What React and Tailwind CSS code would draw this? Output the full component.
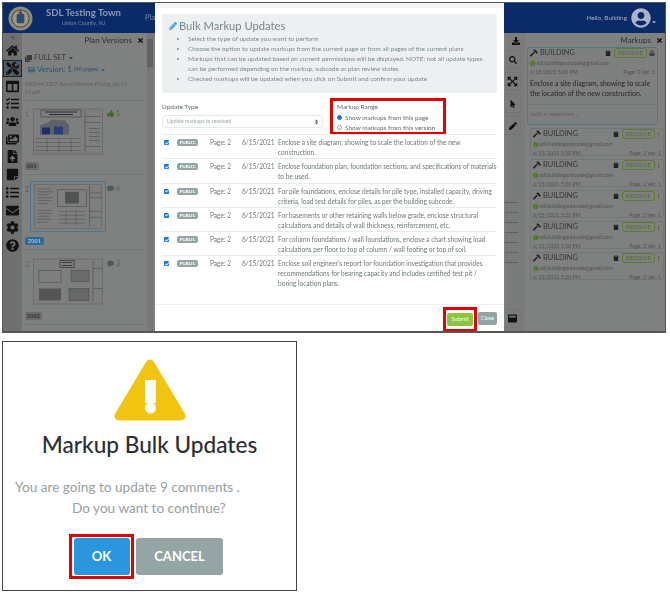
import React from 'react';
import {
  FaHome, FaTools, FaColumns, FaTasks, FaUsers, FaImages, FaFileUpload, FaStickyNote, FaList,
  FaEnvelope, FaCog, FaQuestionCircle, FaDownload, FaSearch, FaExpandArrowsAlt, FaMousePointer,
  FaPen, FaWindowMaximize, FaHammer, FaClipboard, FaLock, FaInfoCircle, FaEllipsisV, FaUserCircle,
  FaCaretDown, FaThumbsUp, FaComment, FaTimes, FaPencilAlt, FaClone, FaRegImage, FaArrowRight, FaCheck,
} from 'react-icons/fa';

const navIcons = [FaHome, FaTools, FaColumns, FaTasks, FaUsers, FaImages, FaFileUpload, FaStickyNote, FaList, FaEnvelope, FaCog, FaQuestionCircle];
const toolIcons = [FaSearch, FaExpandArrowsAlt, FaMousePointer, FaPen];

const bullets = [
  'Select the type of update you want to perform',
  'Choose the option to update markups from the current page or from all pages of the current plans',
  'Markups that can be updated based on current permissions will be displayed. NOTE: not all update types can be performed depending on the markup, subcode or plan review states',
  'Checked markups will be updated when you click on Submit and confirm your update',
];

const rows = [
  'Enclose a site diagram, showing to scale the location of the new construction.',
  'Enclose foundation plan, foundation sections, and specifications of materials to be used.',
  'For pile foundations, enclose details for pile type, installed capacity, driving criteria, load test details for piles, as per the building subcode.',
  'For basements or other retaining walls below grade, enclose structural calculations and details of wall thickness, reinforcement, etc.',
  'For column foundations / wall foundations, enclose a chart showing load calculations per floor to top of column / wall footing or top of soil.',
  "Enclose soil engineer's report for foundation investigation that provides recommendations for bearing capacity and includes certified test pit / boring location plans.",
];

// sketchy drawing sheets used as plan thumbnails
const Thumb = ({ kind }) => (
  <svg viewBox="0 0 70 46" className="w-full h-full">
    <rect width="70" height="46" fill="#7d7e7e" />
    <rect x="0.5" y="0.5" width="69" height="45" fill="none" stroke="#555" strokeWidth="0.4" />
    {kind === 1 && (
      <g>
        <rect x="8" y="1.5" width="40" height="7" fill="none" stroke="#333" strokeWidth="0.5" />
        <path d="M12 3.5h32M16 6h24" stroke="#222" strokeWidth="0.9" />
        <path d="M7 26v-9l8-3 4-3 13 1 4 5v9z" fill="#5d6168" />
        <rect x="9" y="19" width="8" height="7" fill="#1e2f66" />
        <rect x="21" y="18" width="9" height="8" fill="#2b3d78" />
        <path d="M2 30h46M2 34h46M2 38h46M2 42h46M14 30v14M26 30v14M38 30v14" stroke="#444" strokeWidth="0.4" />
        <path d="M52 2v42M52 8h16M52 14h16M56 20h10M56 24h10M56 28h10M56 32h10M52 38h16" stroke="#444" strokeWidth="0.5" />
      </g>
    )}
    {kind === 2 && (
      <g>
        <path d="M4 5h14M4 8h16M4 11h12M4 14h15M4 17h14M4 20h10M4 27h14M4 30h15M4 33h12M4 36h14M4 39h10" stroke="#444" strokeWidth="0.5" />
        <rect x="24" y="6" width="30" height="17" fill="none" stroke="#333" strokeWidth="0.4" />
        <rect x="32" y="8" width="14" height="12" fill="#505151" />
        <path d="M25 28h28M25 32h28M25 36h28M25 40h28M33 28v14M43 28v14" stroke="#444" strokeWidth="0.4" />
        <path d="M57 2v42M57 9h12M57 14h12M57 28h12M57 34h12" stroke="#444" strokeWidth="0.5" />
      </g>
    )}
    {kind === 3 && (
      <g>
        <rect x="27" y="2" width="14" height="7" fill="none" stroke="#333" strokeWidth="0.7" />
        <path d="M29 4h10M29 7h10" stroke="#333" strokeWidth="0.9" />
        <rect x="6" y="12" width="22" height="12" fill="none" stroke="#444" strokeWidth="0.5" />
        <rect x="38" y="12" width="18" height="11" fill="#6a6b6b" stroke="#444" strokeWidth="0.5" />
        <rect x="6" y="30" width="22" height="12" fill="#555" />
        <rect x="36" y="30" width="20" height="12" fill="#666767" stroke="#444" strokeWidth="0.5" />
        <path d="M60 2v42M60 10h9M60 30h9" stroke="#444" strokeWidth="0.5" />
      </g>
    )}
  </svg>
);

const Sheet = ({ num, kind, tag, side, selected, active }) => (
  <div className="flex flex-col border-b border-[#747575] pb-[4px] mb-[6px] shrink-0">
    <div className="flex items-start h-[51px]">
      <span className="w-[8px] text-[7px] leading-[12px] text-[#5d5e5e] pt-[2px]">{num}</span>
      <div className={selected ? 'w-[76px] h-[51px] -ml-[3px] shrink-0 p-[2px] border border-[#4b7494] rounded-[2px]' : 'w-[70px] h-[47px] mt-[2px] mr-[3px] shrink-0'}>
        <Thumb kind={kind} />
      </div>
      <div className="ml-[1px] flex items-center gap-[2px] text-[7px] text-[#5d5e5e] pt-[2px]">{side}</div>
    </div>
    <span className={`mt-[5px] self-start text-[5.5px] font-bold leading-[8px] rounded-[2px] px-[2px] ${active ? 'bg-[#2a6a96] text-[#a9c3d6] px-[3px]' : 'bg-[#6b6c6c] text-[#333]'}`}>{tag}</span>
  </div>
);

const MarkupHead = ({ locked }) => (
  <div className="flex items-center h-[10px]">
    <FaHammer className="text-[#222] text-[8px] mr-[2px] shrink-0" />
    <span className="text-[7.4px] leading-[10px] text-[#333] grow">BUILDING</span>
    <FaClipboard className="text-[#222] text-[6px] mr-[3px] shrink-0" />
    <span className="border border-[#5c7a34] rounded-[3px] text-[#51692d] text-[5.6px] leading-[8px] px-[3px] tracking-[0.2px]">RESOLVE</span>
    {locked ? <FaLock className="text-[#444] text-[6px] ml-[2px] shrink-0" /> : <FaEllipsisV className="text-[#51692d] text-[5px] ml-[1px] shrink-0" />}
  </div>
);

const MarkupMeta = () => (
  <>
    <div className="flex items-center text-[5.3px] leading-[9px] text-[#505151] mt-[1px]">
      <FaInfoCircle className="text-[#4a7a22] text-[5.5px] mr-[1px] shrink-0" />
      sdl.buildingsubcode@gmail.com
    </div>
    <div className="flex justify-between text-[5.3px] leading-[8px] text-[#505151]">
      <span>6/15/2021 5:20 PM</span>
      <span>Page: 2 Ver: 1</span>
    </div>
  </>
);

const App = () => (
  <div className="w-[670px] h-[592px] bg-white pt-[2px] pl-[2px] font-['Lato','Noto_Sans',sans-serif] flex flex-col overflow-hidden">
    {/* main screen, dimmed behind the dialog */}
    <div className="relative w-[664px] h-[331px] shrink-0 border border-[#555] border-b-2 overflow-hidden bg-[#7f8080] flex flex-col blur-[0.3px]">
      <header className="h-[30px] shrink-0 bg-[#0b2a68] flex items-center pl-[5px] pr-[8px]">
        <svg viewBox="0 0 26 26" className="w-[25px] h-[25px]">
          <circle cx="13" cy="13" r="12.5" fill="#8a8a80" />
          <circle cx="13" cy="13" r="9" fill="#a09678" stroke="#3f3f3f" strokeWidth="1" />
          <rect x="9" y="8" width="8" height="10" rx="2" fill="#2a4a7a" />
          <path d="M13 4l2 4h-4z" fill="#7a2a2a" />
        </svg>
        <div className="w-[85px] ml-[8px] flex flex-col items-center pb-[2px]">
          <span className="text-[9.6px] leading-[12px] font-bold text-[#8d99b4] whitespace-nowrap">SDL Testing Town</span>
          <span className="text-[5.6px] leading-[8px] text-[#7888a8] whitespace-nowrap">Union County, NJ</span>
        </div>
        <span className="ml-[19px] text-[7.5px] text-[#7888a8]">Pla</span>
        <div className="ml-auto flex items-center">
          <span className="text-[6.4px] text-[#a2adc4]">Hello, Building</span>
          <FaUserCircle className="ml-[4px] text-[20px] text-[#a9b4ca]" />
          <FaCaretDown className="text-[6px] text-[#a9b4ca] self-end mb-[3px]" />
        </div>
      </header>

      <div className="flex grow min-h-0">
        {/* left nav */}
        <nav className="w-[19px] bg-[#6f7070] flex flex-col items-center shrink-0">
          <FaArrowRight className="text-[5px] text-[#555] my-[2px] shrink-0" />
          {navIcons.map((Icon, i) => (
            <div key={i} className={`w-[19px] h-[17.7px] shrink-0 flex items-center justify-center ${i === 1 ? 'bg-[#4f5c66] border border-[#1c2430]' : ''}`}>
              <Icon className="text-[13px] text-[#121212]" />
            </div>
          ))}
        </nav>

        {/* plan versions */}
        <aside className="w-[133px] shrink-0 flex min-w-0">
          <div className="w-[124px] shrink-0 pl-[3px] pr-[2px] flex flex-col overflow-hidden">
            <div className="flex items-center justify-end text-[8.2px] leading-[12px] text-[#2f3030] h-[14px] shrink-0">
              Plan Versions
              <FaTimes className="ml-[5px] text-[7px] text-[#111]" />
            </div>
            <div className="flex items-center text-[7.5px] text-[#3a3b3b] mt-[6px] leading-[10px] shrink-0">
              <FaClone className="text-[7px] mr-[2px]" />
              FULL SET
              <FaCaretDown className="text-[6px] ml-[2px]" />
            </div>
            <div className="flex items-center text-[8px] text-[#255477] ml-[3px] leading-[11px] shrink-0 mt-[1px]">
              <FaRegImage className="text-[7px] mr-[2px]" />
              Version: 1
              <span className="text-[5.5px] ml-[2px]">(40 pages)</span>
              <FaCaretDown className="text-[6px] ml-[1px]" />
            </div>
            <div className="text-[5.3px] leading-[8px] text-[#5d5e5e] mt-[5px] pb-[4px] border-b border-[#747575] mb-[5px] shrink-0">
              <div className="w-[106px]">190044-1307-Beach-Terrace-Pricing_06-17-19.pdf</div>
            </div>
            <Sheet num="1" kind={1} tag="001" side={<><FaThumbsUp className="text-[#3e6a1e]" /><span className="text-[#3e6a1e]">1</span></>} />
            <Sheet num="2" kind={2} tag="Z001" active selected side={<><FaComment className="text-[#4a5a5a]" />6</>} />
            <Sheet num="3" kind={3} tag="Z002" side={<><FaComment className="text-[#4a5a5a]" />3</>} />
          </div>
          <div className="w-[6px] ml-[1px] bg-[#767777] flex flex-col">
            <div className="h-[28px] mt-[6px] bg-[#606161]" />
          </div>
        </aside>

        <div className="w-[350px] shrink-0" />

        {/* tool strip */}
        <div className="w-[20px] shrink-0 bg-[#7a7b7b] flex flex-col items-start pt-[4px]">
          <FaDownload className="text-[8px] text-[#111] ml-[7px]" />
          <div className="mt-[5px] flex flex-col gap-[3px] items-start">
            {toolIcons.map((Icon, i) => (
              <div key={i} className="w-[16px] h-[19px] border border-[#747575] border-l-0 rounded-r-[3px] flex items-center justify-center">
                <Icon className={`text-[#111] ${i === 1 ? 'text-[11px]' : 'text-[8px]'}`} />
              </div>
            ))}
          </div>
          <div className="grow flex flex-col justify-center gap-[9px] pt-[20px]">
            {[0, 1, 2, 3, 4, 5, 6].map((i) => <div key={i} className="w-[13px] h-px bg-[#5f6060]" />)}
          </div>
          <div className="w-[16px] h-[19px] mb-[3px] border border-[#747575] border-l-0 rounded-r-[3px] flex items-center justify-center">
            <FaWindowMaximize className="text-[9px] text-[#111]" />
          </div>
        </div>

        {/* markups */}
        <aside className="grow min-w-0 pl-[2px] flex flex-col overflow-hidden">
          <div className="flex items-center justify-end h-[14px] shrink-0 text-[8px] text-[#2f3030] pr-[2px]">
            Markups
            <FaTimes className="ml-[5px] text-[7px] text-[#111]" />
          </div>
          <div className="border border-[#54748c] rounded-[3px] bg-[#7e7f7f] mr-[7px] px-[2px] shrink-0">
            <MarkupHead locked />
            <MarkupMeta />
            <p className="text-[6.9px] leading-[10px] text-[#242525] mt-[2px] h-[26px]">Enclose a site diagram, showing to scale the location of the new construction.</p>
            <div className="border-t border-[#747575] -mx-[2px] px-[2px] h-[20px] text-[6.5px] text-[#5d5e5e] pt-[4px]">Add a response...</div>
          </div>
          <div className="flex flex-col gap-[3px] mt-[3px] pl-[3px] pr-[1px] shrink-0">
            {[0, 1, 2, 3, 4].map((i) => (
              <div key={i} className="border border-[#747575] rounded-[2px] px-[2px] h-[28px]">
                <MarkupHead />
                <MarkupMeta />
              </div>
            ))}
          </div>
        </aside>
      </div>

      {/* bulk update dialog */}
      <div className="absolute left-[152px] top-0 bottom-0 w-[349px] bg-white border-t-[5px] border-[#f4f4f4] flex flex-col px-[7px] pt-[6px]">
        <div className="bg-[#ecf0f1] rounded-[2px] h-[79px] shrink-0 px-[7px] pt-[5px]">
          <div className="flex items-center text-[11.2px] leading-[13px] text-[#77888a]">
            <FaPencilAlt className="text-[8px] text-[#3498db] mr-[2px]" />
            Bulk Markup Updates
          </div>
          <ul className="list-disc pl-[19px] mt-[2px] text-[6.45px] leading-[10px] text-[#7b8a8b]">
            {bullets.map((b) => <li key={b}>{b}</li>)}
          </ul>
        </div>

        <div className="flex h-[42px] shrink-0 mt-[5px]">
          <div className="w-[161px] pt-[4px]">
            <div className="text-[6.5px] leading-[10px] text-[#5f6a6b]">Update Type</div>
            <div className="mt-[3px] h-[13px] border border-[#e6e9ea] rounded-[3px] flex items-center justify-between px-[4px] text-[5.2px] text-[#9aa5a6]">
              Update markups to resolved
              <svg viewBox="0 0 6 10" className="w-[3px] h-[6px]"><path d="M3 0l3 4H0zM3 10L0 6h6z" fill="#444" /></svg>
            </div>
          </div>
          <div className="ml-[7px] w-[116px] h-[37px] border-[3px] border-[#e60000] pl-[4px] pt-[1px] text-[6.45px] leading-[10px] text-[#5f6a6b]">
            <div className="mb-[1px]">Markup Range</div>
            <div className="flex items-center leading-[9.5px]">
              <span className="w-[5px] h-[5px] rounded-full border-[1.5px] border-[#1976d2] bg-[#1976d2] ring-1 ring-white mr-[3px]" />
              Show markups from this page
            </div>
            <div className="flex items-center leading-[9.5px]">
              <span className="w-[5px] h-[5px] rounded-full border border-[#999] mr-[3px]" />
              Show markups from this version
            </div>
          </div>
        </div>

        <div className="flex flex-col -mt-[6px]">
          {rows.map((r, i) => (
            <div key={i} className={`flex border-t border-[#e8ebec] pt-[3px] text-[6.55px] leading-[10px] text-[#6b7778] ${i === 5 ? 'h-[39px]' : 'h-[24.3px]'}`}>
              <span className="w-[5px] h-[5px] mt-[2px] ml-[2px] bg-[#1976d2] rounded-[1px] flex items-center justify-center shrink-0">
                <FaCheck className="text-[4px] text-white" />
              </span>
              <span className="ml-[8px] w-[21px] h-[7px] mt-[1px] shrink-0 bg-[#95a5a6] rounded-[2px] text-[4.5px] leading-[7px] font-bold text-white text-center">PUBLIC</span>
              <span className="ml-[12px] w-[32px] shrink-0">Page: 2</span>
              <span className="w-[36px] shrink-0">6/15/2021</span>
              <span className="grow">{r}</span>
            </div>
          ))}
        </div>

        <div className="border-t border-[#eef0f0] -mx-[7px] mt-auto h-[27px] shrink-0 flex justify-end items-start pr-[7px]">
          <div className="border-[3px] border-[#e60000] w-[34px] h-[25px] mt-[2px] flex items-center justify-center shrink-0">
            <span className="w-[26px] h-[13px] bg-[#8cc63f] rounded-[2px] text-[5.5px] leading-[13px] text-white text-center shrink-0">Submit</span>
          </div>
          <span className="ml-[1px] mt-[7px] w-[19px] h-[13px] bg-[#95a5a6] rounded-[2px] text-[5.5px] leading-[13px] text-white text-center">Close</span>
        </div>
      </div>
    </div>

    {/* confirmation box */}
    <div className="mt-[8px] w-[295px] h-[250px] border border-[#444] flex flex-col items-center bg-white shrink-0">
      <svg viewBox="0 0 72 64" className="w-[72px] h-[64px] mt-[16px] shrink-0">
        <path d="M36 6L67 58H5z" fill="#f1c40f" stroke="#f1c40f" strokeWidth="9" strokeLinejoin="round" />
        <rect x="31" y="22" width="11" height="23" rx="1" fill="#fff" />
        <circle cx="36.5" cy="50" r="5.5" fill="#fff" />
      </svg>
      <h2 className="mt-[9px] text-[22.6px] leading-[28px] font-medium text-[#2b2f33]">Markup Bulk Updates</h2>
      <div className="self-start mt-[18px] pl-[12px] text-[13.6px] leading-[21px] text-[#95a0a1]">
        <div>You are going to update 9 comments .</div>
        <div className="pl-[57px]">Do you want to continue?</div>
      </div>
      <div className="self-start ml-[66px] mt-[15px] flex items-center">
        <div className="border-[3px] border-[#e60000] w-[65px] h-[45px] flex items-center justify-center">
          <span className="w-[56px] h-[37px] rounded-[3px] bg-[#2a96e0] text-white font-bold text-[13px] leading-[37px] text-center shrink-0">OK</span>
        </div>
        <span className="ml-[2px] w-[87px] h-[37px] rounded-[3px] bg-[#95a5a6] text-white font-bold text-[13px] leading-[37px] text-center">CANCEL</span>
      </div>
    </div>
  </div>
);

export default App;
